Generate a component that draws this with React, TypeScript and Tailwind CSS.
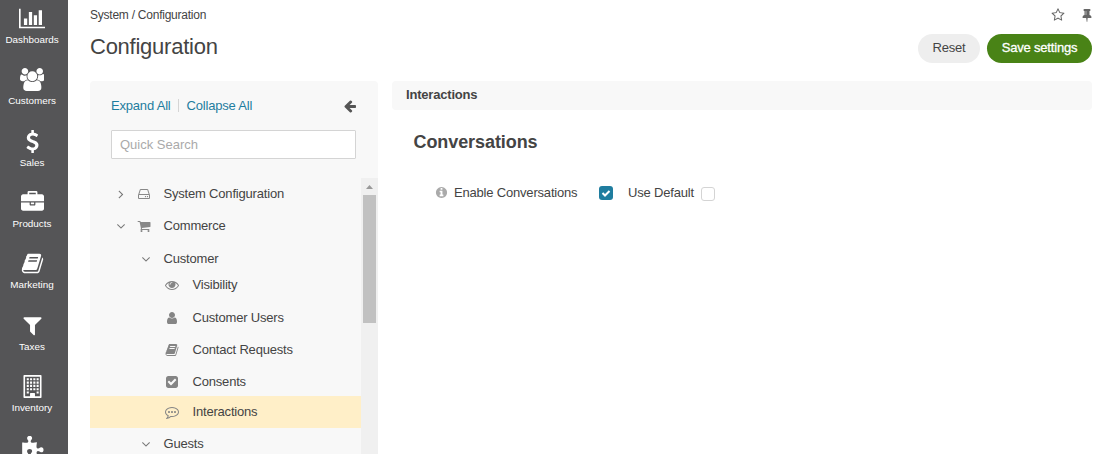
import React from "react";

const icons = {
  chart: "M640 896v512h-256v-512h256zm384-512v1024h-256v-1024h256zm1024 1152v128h-2048v-1536h128v1408h1920zm-640-896v768h-256v-768h256zm384-384v1152h-256v-1152h256z",
  users: "M593 896q-162 5-265 128h-134q-82 0-138-40.5t-56-118.5q0-353 124-353 6 0 43.5 21t97.5 42.5 119 21.5q67 0 133-23-5 37-5 66 0 159 93 293zm1071 637q0 120-73 189.5t-194 69.5h-874q-121 0-194-69.5t-73-189.5q0-53 3.5-103.5t14-109 26.5-108.5 43-97.5 62-81 85.5-53.5 111.5-20q10 0 43 21.5t73 48 107 48 135 21.5 135-21.5 107-48 73-48 43-21.5q61 0 111.5 20t85.5 53.5 62 81 43 97.5 26.5 108.5 14 109 3.5 103.5zm-1024-1277q0 106-75 181t-181 75-181-75-75-181 75-181 181-75 181 75 75 181zm704 384q0 159-112.5 271.5t-271.5 112.5-271.5-112.5-112.5-271.5 112.5-271.5 271.5-112.5 271.5 112.5 112.5 271.5zm576 225q0 78-56 118.5t-138 40.5h-134q-103-123-265-128 93-134 93-293 0-29-5-66 66 23 133 23 59 0 119-21.5t97.5-42.5 43.5-21q124 0 124 353zm-128-609q0 106-75 181t-181 75-181-75-75-181 75-181 181-75 181 75 75 181z",
  dollar: "M1362 1185q0 153-99.5 263.5t-258.5 136.5v175q0 14-9 23t-23 9h-135q-13 0-22.5-9.5t-9.5-22.5v-175q-66-9-127.5-31t-101.5-44.5-74-48-46.5-37.5-17.5-18q-17-21-2-41l103-135q7-10 23-12 15-2 24 9l2 2q113 99 243 125 37 8 74 8 81 0 142.5-43t61.5-122q0-28-15-53t-33.5-42-58.5-37.5-66-32-80-32.5q-39-16-61.5-25t-61.5-26.5-62.5-31-56.5-35.5-53.5-42.5-43.5-49-35.5-58-21-66.5-8.5-78q0-138 98-242t255-134v-180q0-13 9.5-22.5t22.5-9.5h135q14 0 23 9t9 23v176q57 6 110.5 23t87 33.5 63.5 37.5 39 29 15 14q17 18 5 38l-81 146q-8 15-23 16-14 3-27-7-3-3-14.5-12t-39-26.5-58.5-32-74.5-26-85.5-11.5q-95 0-155 43t-60 111q0 26 8.5 48t29.5 41.5 39.5 33 56 31 60.5 27 70 27.5q53 20 81 31.5t76 35 75.5 42.5 62 50 53 63.5 31.5 76.5 13 94z",
  briefcase: "M640 256h512v-128h-512v128zm1152 640v480q0 66-47 113t-113 47h-1472q-66 0-113-47t-47-113v-480h672v160q0 26 19 45t45 19h320q26 0 45-19t19-45v-160h672zm-768 0v128h-256v-128h256zm768-480v384h-1792v-384q0-66 47-113t113-47h352v-160q0-40 28-68t68-28h576q40 0 68 28t28 68v160h352q66 0 113 47t47 113z",
  book: "M1703 478q40 57 18 129l-275 906q-19 64-76.5 107.5t-122.5 43.5h-923q-77 0-148.5-53.5t-99.5-131.5q-24-67-2-127 0-4 3-27t4-37q1-8-3-21.5t-3-19.5q2-11 8-21t16.5-23.5 16.5-23.5q23-38 45-91.5t30-91.5q3-10 .5-30t-.5-28q3-11 17-28t17-23q21-36 42-92t25-90q1-9-2.5-32t.5-28q4-13 22-30.5t22-22.5q19-26 42.5-84.5t27.5-96.5q1-8-3-25.5t-2-26.5q2-8 9-18t18-23 17-21q8-12 16.5-30.5t15-35 16-36 19.5-32 26.5-23.5 36-11.5 47.5 5.5l-1 3q38-9 51-9h761q74 0 114 56t18 130l-274 906q-36 119-71.5 153.5t-128.5 34.5h-869q-27 0-38 15-11 16-1 43 24 70 144 70h923q29 0 56-15.5t35-41.5l300-987q7-22 5-57 38 15 59 43zm-1064 2q-4 13 2 22.5t20 9.5h608q13 0 25.5-9.5t16.5-22.5l21-64q4-13-2-22.5t-20-9.5h-608q-13 0-25.5 9.5t-16.5 22.5zm-83 256q-4 13 2 22.5t20 9.5h608q13 0 25.5-9.5t16.5-22.5l21-64q4-13-2-22.5t-20-9.5h-608q-13 0-25.5 9.5t-16.5 22.5z",
  filter: "M1595 295q17 41-14 70l-493 493v742q0 42-39 59-13 5-25 5-27 0-45-19l-256-256q-19-19-19-45v-486l-493-493q-31-29-14-70 17-39 59-39h1280q42 0 59 39z",
  building: "M256 0h1280q64 0 64 64v1664q0 64-64 64h-1280q-64 0-64-64v-1664q0-64 64-64zm64 128v1536h384v-224q0-32 32-32h320q32 0 32 32v224h384v-1536zM448 256h160v160h-160zM704 256h160v160h-160zM960 256h160v160h-160zM1216 256h160v160h-160zM448 512h160v160h-160zM704 512h160v160h-160zM960 512h160v160h-160zM1216 512h160v160h-160zM448 768h160v160h-160zM704 768h160v160h-160zM960 768h160v160h-160zM1216 768h160v160h-160zM448 1024h160v160h-160zM704 1024h160v160h-160zM960 1024h160v160h-160zM1216 1024h160v160h-160zM448 1280h160v160h-160zM1216 1280h160v160h-160z",
  puzzle: "M1755 1083q0 81-44.5 135t-123.5 54q-41 0-77.5-17.5t-59-38-56.5-38-71-17.5q-110 0-110 124 0 39 16 115t15 115v5q-22 0-33 1-34 3-97.5 11.5t-115.5 13.5-98 5q-61 0-103-26.5t-42-83.5q0-37 17.5-71t38-56.5 38-59 17.5-77.5q0-79-54-123.5t-135-44.5q-84 0-143 45.5t-59 127.5q0 43 15 83t33.5 64.5 33.5 53 15 50.5q0 45-46 89-37 35-117 35-95 0-245-24-9-2-27.5-4t-27.5-4l-13-2q-1 0-3-1-2 0-2-1v-1024q2 1 17.5 3.5t34 5 21.5 3.5q150 24 245 24 80 0 117-35 46-44 46-89 0-22-15-50.5t-33.5-53-33.5-64.5-15-83q0-82 59-127.5t144-45.5q80 0 134 44.5t54 123.5q0 41-17.5 77.5t-38 59-38 56.5-17.5 71q0 57 42 83.5t103 26.5q64 0 180-15t163-17v2q-1 2-3.5 17.5t-5 34-3.5 21.5q-24 150-24 245 0 80 35 117 44 46 89 46 22 0 50.5-15t53-33.5 64.5-33.5 83-15q82 0 127.5 59t45.5 143z",
  star: "M1201 1004l306-297-422-62-189-382-189 382-422 62 306 297-73 421 378-199 377 199zm527-357q0 22-26 48l-363 354 86 500q1 7 1 20 0 50-41 50-19 0-40-12l-449-236-449 236q-22 12-40 12-21 0-31.5-14.5t-10.5-35.5q0-6 2-20l86-500-364-354q-25-27-25-48 0-37 56-46l502-73 225-455q19-41 49-41t49 41l225 455 502 73q56 9 56 46z",
  pin: "M800 864v-448q0-14-9-23t-23-9-23 9-9 23v448q0 14 9 23t23 9 23-9 9-23zm672 352q0 26-19 45t-45 19h-429l-51 483q-2 12-10.5 20.5t-20.5 8.500h-1q-27 0-32-27l-76-485h-404q-26 0-45-19t-19-45q0-123 78.5-221.5t177.5-98.5v-512q-52 0-90-38t-38-90 38-90 90-38h640q52 0 90 38t38 90-38 90-90 38v512q99 0 177.5 98.5t78.5 221.5z",
  arrowLeft: "M1664 896v128q0 53-32.5 90.5t-84.5 37.5h-704l293 294q38 36 38 90t-38 90l-75 76q-37 37-90 37-52 0-91-37l-651-652q-37-37-37-90 0-52 37-91l651-650q38-38 91-38 52 0 90 38l75 74q38 38 38 91t-38 91l-293 293h704q52 0 84.5 37.5t32.5 90.5z",
  right: "M1171 960q0 13-10 23l-466 466q-10 10-23 10t-23-10l-50-50q-10-10-10-23t10-23l393-393-393-393q-10-10-10-23t10-23l50-50q10-10 23-10t23 10l466 466q10 10 10 23z",
  down: "M1395 736q0 13-10 23l-466 466q-10 10-23 10t-23-10l-466-466q-10-10-10-23t10-23l50-50q10-10 23-10t23 10l393 393 393-393q10-10 23-10t23 10l50 50q10 10 10 23z",
  hdd: "M1168 1216q0 33-23.5 56.5t-56.5 23.5-56.5-23.5-23.5-56.5 23.5-56.5 56.5-23.5 56.5 23.5 23.5 56.5zm256 0q0 33-23.5 56.5t-56.5 23.5-56.5-23.5-23.5-56.5 23.5-56.5 56.5-23.5 56.5 23.5 23.5 56.5zm112 160v-320q0-13-9.5-22.5t-22.5-9.5h-1216q-13 0-22.5 9.5t-9.5 22.5v320q0 13 9.5 22.5t22.5 9.5h1216q13 0 22.5-9.5t9.5-22.5zm-1230-480h1180l-157-482q-4-13-16-21.5t-26-8.5h-782q-14 0-26 8.5t-16 21.5zm1358 160v320q0 66-47 113t-113 47h-1216q-66 0-113-47t-47-113v-320q0-25 16-75l197-606q17-53 63-86t101-33h782q55 0 101 33t63 86l197 606q16 50 16 75z",
  cart: "M704 1536q0 52-38 90t-90 38-90-38-38-90 38-90 90-38 90 38 38 90zm896 0q0 52-38 90t-90 38-90-38-38-90 38-90 90-38 90 38 38 90zm128-1088v512q0 24-16.5 42.5t-40.5 21.5l-1044 122q13 60 13 70 0 16-24 64h920q26 0 45 19t19 45-19 45-45 19h-1024q-26 0-45-19t-19-45q0-11 8-31.5t16-36 21.5-40 15.5-29.5l-177-823h-204q-26 0-45-19t-19-45 19-45 45-19h256q16 0 28.5 6.5t19.5 15.5 13 24.5 8 26 5.5 29.5 4.5 26h1201q26 0 45 19t19 45z",
  eye: "M1664 960q-152-236-381-353 61 104 61 225 0 185-131.5 316.5t-316.5 131.5-316.5-131.5-131.5-316.5q0-121 61-225-229 117-381 353 133 205 333.5 326.5t434.5 121.5 434.5-121.5 333.5-326.5zm-720-384q0-20-14-34t-34-14q-125 0-214.5 89.5t-89.5 214.5q0 20 14 34t34 14 34-14 14-34q0-86 61-147t147-61q20 0 34-14t14-34zm848 384q0 34-20 69-140 230-376.5 368.5t-499.5 138.5-499.5-139-376.5-368q-20-35-20-69t20-69q140-229 376.5-368t499.5-139 499.5 139 376.5 368q20 35 20 69z",
  user: "M1536 1399q0 109-62.5 187t-150.5 78h-854q-88 0-150.5-78t-62.5-187q0-85 8.5-160.5t31.5-152 58.5-131 94-89 134.5-34.5q131 128 313 128t313-128q76 0 134.5 34.5t94 89 58.5 131 31.5 152 8.5 160.5zm-256-887q0 159-112.5 271.5t-271.5 112.5-271.5-112.5-112.5-271.5 112.5-271.5 271.5-112.5 271.5 112.5 112.5 271.5z",
  checkSquare: "M813 1299l614-614q19-19 19-45t-19-45l-102-102q-19-19-45-19t-45 19l-467 467-211-211q-19-19-45-19t-45 19l-102 102q-19 19-19 45t19 45l358 358q19 19 45 19t45-19zm851-883v960q0 119-84.5 203.5t-203.5 84.5h-960q-119 0-203.5-84.5t-84.5-203.5v-960q0-119 84.5-203.5t203.5-84.5h960q119 0 203.5 84.5t84.5 203.5z",
  comment: "M640 896q0 53-37.5 90.5t-90.5 37.5-90.5-37.5-37.5-90.5 37.5-90.5 90.5-37.5 90.5 37.5 37.5 90.5zm384 0q0 53-37.5 90.5t-90.5 37.5-90.5-37.5-37.5-90.5 37.5-90.5 90.5-37.5 90.5 37.5 37.5 90.5zm384 0q0 53-37.5 90.5t-90.5 37.5-90.5-37.5-37.5-90.5 37.5-90.5 90.5-37.5 90.5 37.5 37.5 90.5zm-512-512q-204 0-381.5 69.5t-282 187.5-104.5 255q0 112 71.5 213.5t201.5 175.5l87 50-27 96q-24 91-70 172 152-63 275-171l43-38 57 6q69 8 130 8 204 0 381.5-69.5t282-187.5 104.5-255-104.5-255-282-187.5-381.5-69.5zm896 512q0 174-120 321.5t-326 233-450 85.5q-70 0-145-8-198 175-460 242-49 14-114 22h-5q-15 0-27-10.5t-16-27.5v-1q-3-4-.5-12t2-10 4.5-9.5l6-9 7-8.5 8-9q7-8 31-34.5t34.5-38 31-39.5 32.5-51 27-59 26-76q-157-89-247.5-220t-90.5-281q0-174 120-321.5t326-233 450-85.5 450 85.5 326 233 120 321.5z",
  info: "M1152 1376v-160q0-14-9-23t-23-9h-96v-512q0-14-9-23t-23-9h-320q-14 0-23 9t-9 23v160q0 14 9 23t23 9h96v320h-96q-14 0-23 9t-9 23v160q0 14 9 23t23 9h448q14 0 23-9t9-23zm-128-896v-160q0-14-9-23t-23-9h-192q-14 0-23 9t-9 23v160q0 14 9 23t23 9h192q14 0 23-9t9-23zm640 416q0 209-103 385.5t-279.5 279.5-385.5 103-385.5-103-279.5-279.5-103-385.5 103-385.5 279.5-279.5 385.5-103 385.5 103 279.5 279.5 103 385.5z",
};

type IconName = keyof typeof icons;

function Icon({ name, width = 1792, className }: { name: IconName; width?: number; className: string }) {
  return (
    <svg viewBox={`0 0 ${width} 1792`} fill="currentColor" className={`shrink-0 ${className}`}>
      <path d={icons[name]} fillRule={name === "building" ? "evenodd" : "nonzero"} />
    </svg>
  );
}

const menu: { label?: string; icon: IconName; width?: number }[] = [
  { label: "Dashboards", icon: "chart", width: 2048 },
  { label: "Customers", icon: "users", width: 1920 },
  { label: "Sales", icon: "dollar" },
  { label: "Products", icon: "briefcase" },
  { label: "Marketing", icon: "book" },
  { label: "Taxes", icon: "filter" },
  { label: "Inventory", icon: "building" },
  { icon: "puzzle" },
];

function Branch({ label, icon, open, nested, className }: { label: string; icon?: IconName; open?: boolean; nested?: boolean; className: string }) {
  return (
    <div className={`flex shrink-0 items-center ${nested ? "pl-[48.5px]" : "pl-[23.5px]"} ${className}`}>
      <Icon name={open ? "down" : "right"} className="size-[14px] text-[#777]" />
      {icon && <Icon name={icon} className="ml-[9px] size-[14px] text-[#888]" />}
      <span className={nested ? "ml-[11px]" : "ml-[13px]"}>{label}</span>
    </div>
  );
}

function Leaf({ label, icon, className }: { label: string; icon: IconName; className: string }) {
  return (
    <div className={`flex shrink-0 items-center pl-[75px] ${className}`}>
      <Icon name={icon} className="size-[14px] text-[#858585]" />
      <span className="ml-[13.5px]">{label}</span>
    </div>
  );
}

export default function App() {
  return (
    <div className="flex h-[454px] w-[1105px] overflow-hidden bg-white font-['Liberation_Sans',Arial,sans-serif] text-[13px] leading-[16px] tracking-[-0.19px] text-[#444]">
      <nav className="flex w-[68px] shrink-0 flex-col overflow-hidden bg-[#555557] pt-[7px] tracking-normal text-white">
        {menu.map((m) => (
          <a key={m.icon} className="flex h-[61.35px] shrink-0 flex-col items-center pr-[4px]">
            <Icon name={m.icon} width={m.width} className="h-[23px]" />
            {m.label && <span className="mt-[4px] text-[9.9px] leading-[12px]">{m.label}</span>}
          </a>
        ))}
      </nav>

      <div className="flex flex-1 flex-col pr-[13px] pl-[22px]">
        <header className="flex h-[81px] shrink-0 justify-between">
          <div className="flex flex-col pt-[8px]">
            <div className="text-[12px] leading-[14px] tracking-[-0.24px]">System / Configuration</div>
            <h1 className="mt-[11px] text-[22px] leading-[28px] tracking-[-0.25px]">Configuration</h1>
          </div>
          <div className="flex flex-col items-end pt-[8px]">
            <div className="-mr-[2px] flex gap-[15px] text-[#666]">
              <Icon name="star" className="size-[14px]" />
              <Icon name="pin" className="size-[14px]" />
            </div>
            <div className="mt-[12px] flex gap-[7px]">
              <button className="h-[29px] w-[62px] rounded-full bg-[#eee] pb-[2px]">Reset</button>
              <button className="h-[29px] w-[105px] rounded-full bg-[#498316] pb-[2px] text-white [-webkit-text-stroke:0.3px_white]">Save settings</button>
            </div>
          </div>
        </header>

        <div className="flex min-h-0 flex-1 gap-[14px]">
          <aside className="flex w-[288px] shrink-0 flex-col overflow-hidden rounded-t-[4px] bg-[#f8f8f8]">
            <div className="flex h-[49px] shrink-0 items-center px-[21px] text-[#1f7d9f]">
              <a>Expand All</a>
              <i className="mx-[7.5px] h-[13px] w-px bg-[#d5d5d5]" />
              <a>Collapse All</a>
              <Icon name="arrowLeft" className="ml-auto size-[14px] text-[#555]" />
            </div>
            <div className="mx-[21px] flex h-[29px] w-[245px] shrink-0 items-center rounded-[1px] border border-[#d4d4d4] bg-white px-[8px] tracking-normal text-[#aaa]">
              Quick Search
            </div>
            <div className="mt-[19px] flex min-h-0 flex-1">
              <div className="flex min-w-0 flex-1 flex-col overflow-hidden">
                <Branch label="System Configuration" icon="hdd" className="h-[32px]" />
                <Branch label="Commerce" icon="cart" open className="h-[32px]" />
                <Branch label="Customer" open nested className="h-[33px]" />
                <Leaf label="Visibility" icon="eye" className="h-[20px]" />
                <Leaf label="Customer Users" icon="user" className="mt-[7px] h-[32px]" />
                <Leaf label="Contact Requests" icon="book" className="h-[32px]" />
                <Leaf label="Consents" icon="checkSquare" className="h-[32px]" />
                <Leaf label="Interactions" icon="comment" className="-mt-[2px] h-[32px] bg-[#ffefc8]" />
                <Branch label="Guests" open nested className="h-[32px]" />
              </div>
              <div className="flex w-[17px] shrink-0 flex-col items-center bg-[#f0f0f0]">
                <svg viewBox="0 0 17 17" className="size-[17px] shrink-0">
                  <path d="M5 11h7L8.500 7z" fill="#999" />
                </svg>
                <div className="h-[128px] w-[13px] bg-[#c1c1c1]" />
              </div>
            </div>
          </aside>

          <main className="flex flex-1 flex-col">
            <div className="flex h-[29px] items-center rounded-[4px] bg-[#f8f8f8] px-[14px] pb-[2px] font-bold">Interactions</div>
            <h2 className="mt-[21px] pl-[21.5px] text-[18px] leading-[22px] font-bold tracking-[-0.08px]">Conversations</h2>
            <div className="mt-[32px] flex h-[16px] items-center pl-[43px]">
              <Icon name="info" className="-mt-px size-[13px] text-[#aaa]" />
              <span className="ml-[6px] w-[145px]">Enable Conversations</span>
              <span className="flex size-[14px] items-center justify-center rounded-[3px] bg-[#1f7d9f]">
                <svg viewBox="0 0 10 10" className="size-[10px]" fill="none" stroke="white" strokeWidth="2">
                  <path d="M1.500 5l2.500 2.500L8.500 3" />
                </svg>
              </span>
              <span className="ml-[15px] w-[73px]">Use Default</span>
              <span className="mt-px size-[14px] rounded-[3px] border border-[#d4d4d4] bg-white" />
            </div>
          </main>
        </div>
      </div>
    </div>
  );
}
